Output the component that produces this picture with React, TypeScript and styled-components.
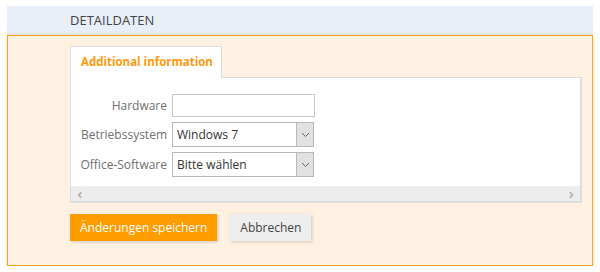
import React from "react";
import styled, { createGlobalStyle } from "styled-components";

const GlobalStyle = createGlobalStyle`
  html, body {
    margin: 0;
    padding: 0;
    background: #ffffff;
  }
  body {
    font-family: "Open Sans", "Noto Sans", Arial, sans-serif;
    font-size: 12px;
    color: #444;
  }
`;

const App = () => {
  return (
    <>
      <GlobalStyle />
      <Page>
        <Header>DETAILDATEN</Header>

        <Panel>
          <TabStrip>
            <Tab active>Additional information</Tab>
          </TabStrip>

          <TabBody>
            <Form>
              <Row>
                <Label>Hardware</Label>
                <TextInput type="text" defaultValue="" />
              </Row>
              <Row>
                <Label>Betriebssystem</Label>
                <Select>
                  <SelectValue>Windows 7</SelectValue>
                  <SelectArrow>
                    <Chevron />
                  </SelectArrow>
                </Select>
              </Row>
              <Row>
                <Label>Office-Software</Label>
                <Select>
                  <SelectValue>Bitte wählen</SelectValue>
                  <SelectArrow>
                    <Chevron />
                  </SelectArrow>
                </Select>
              </Row>
            </Form>

            <ScrollBar>
              <ScrollArrow>‹</ScrollArrow>
              <ScrollArrow>›</ScrollArrow>
            </ScrollBar>
          </TabBody>

          <Actions>
            <Button primary>Änderungen speichern</Button>
            <Button>Abbrechen</Button>
          </Actions>
        </Panel>
      </Page>
    </>
  );
};

export default App;

const Chevron = () => (
  <svg width="9" height="6" viewBox="0 0 9 6">
    <path d="M1 1 L4.5 4.5 L8 1" fill="none" stroke="#666" strokeWidth="1" />
  </svg>
);

const Page = styled.div`
  padding: 6px 7px 0 7px;
  width: 586px;
`;

const Header = styled.div`
  height: 29px;
  line-height: 29px;
  background-color: #e9eff8;
  padding-left: 63px;
  font-size: 13px;
  color: #444;
`;

const Panel = styled.div`
  box-sizing: border-box;
  height: 231px;
  border: 1px solid #ffa11a;
  background-color: #fef1e2;
  padding: 10px 10px 0 62px;
  box-shadow: 0 0 4px rgba(200, 150, 90, 0.35);
`;

const TabStrip = styled.div`
  display: flex;
`;

const Tab = styled.div<{ active?: boolean }>`
  height: 31px;
  line-height: 30px;
  padding: 0 8px 0 10px;
  background-color: #fff;
  border: 1px solid #dddddd;
  border-bottom: none;
  color: #ff9a0d;
  font-weight: 700;
  font-size: 11.5px;
  margin-bottom: -1px;
  position: relative;
  z-index: 1;
`;

const TabBody = styled.div`
  background-color: #fff;
  border: 1px solid #dddddd;
  border-right-width: 2px;
  border-bottom-width: 2px;
  display: flex;
  flex-direction: column;
`;

const Form = styled.div`
  padding: 16px 0 9px 0;
  display: flex;
  flex-direction: column;
  gap: 5px;
`;

const Row = styled.div`
  display: flex;
  align-items: center;
`;

const Label = styled.div`
  width: 101px;
  text-align: right;
  padding-right: 5px;
  box-sizing: border-box;
  color: #707070;
  font-size: 12px;
`;

const TextInput = styled.input`
  box-sizing: border-box;
  width: 143px;
  height: 23px;
  border: 1px solid #c8c8c8;
  background: #fff;
  margin: 0;
  padding: 0 4px;
  font: inherit;
  outline: none;
`;

const Select = styled.div`
  box-sizing: border-box;
  width: 142px;
  height: 25px;
  border: 1px solid #b9b9b9;
  background: #fff;
  display: flex;
  align-items: stretch;
`;

const SelectValue = styled.div`
  flex: 1;
  padding-left: 4px;
  line-height: 23px;
  color: #333;
  font-size: 12px;
`;

const SelectArrow = styled.div`
  width: 16px;
  background-color: #e1e1e1;
  border-left: 1px solid #b9b9b9;
  display: flex;
  align-items: center;
  justify-content: center;
`;

const ScrollBar = styled.div`
  height: 15px;
  background-color: #ededed;
  display: flex;
  justify-content: space-between;
  align-items: center;
  padding: 0 6px;
`;

const ScrollArrow = styled.span`
  color: #b5b5b5;
  font-size: 15px;
  font-weight: 700;
  line-height: 15px;
`;

const Actions = styled.div`
  display: flex;
  gap: 13px;
  margin-top: 11px;
`;

const Button = styled.button<{ primary?: boolean }>`
  height: 27px;
  padding: 0 10px;
  border: none;
  font-family: inherit;
  font-size: 12px;
  cursor: pointer;
  color: ${(p) => (p.primary ? "#fff" : "#444")};
  background-color: ${(p) => (p.primary ? "#ff9c00" : "#eeeeee")};
  box-shadow: 1px 1px 3px rgba(0, 0, 0, 0.18);
`;
